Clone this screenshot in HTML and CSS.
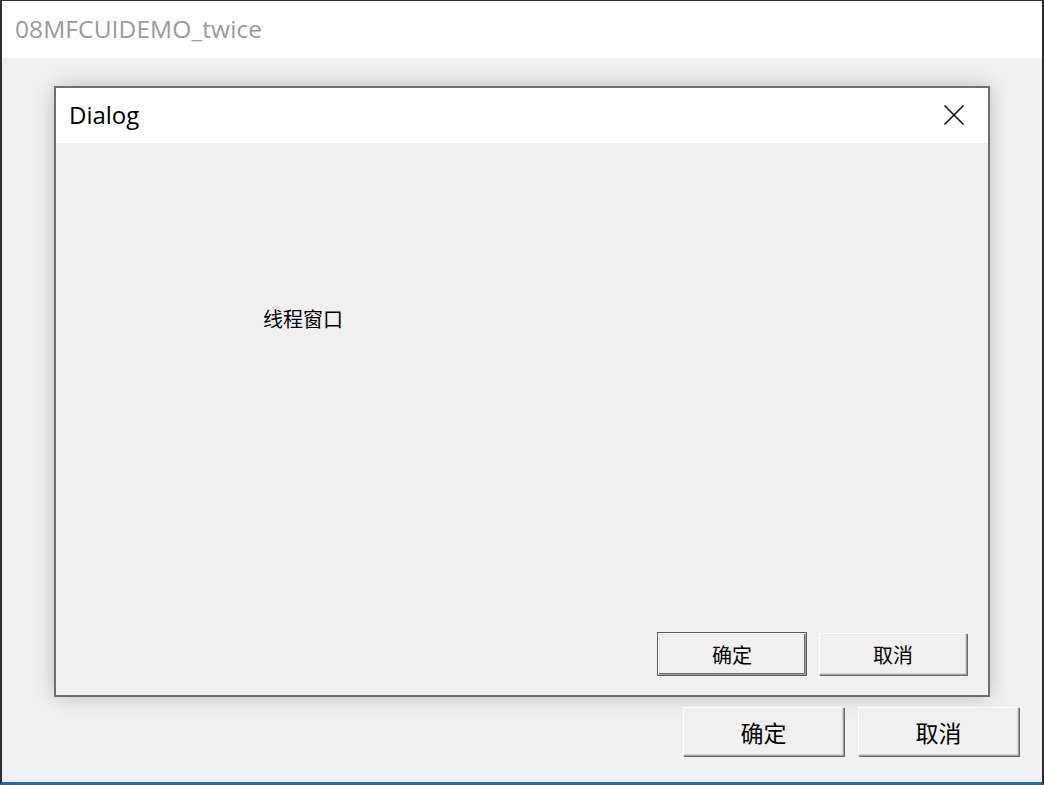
FILE: index.html
```html
<!DOCTYPE html>
<html lang="zh-CN">
<head>
<meta charset="utf-8">
<title>08MFCUIDEMO_twice</title>
<link rel="stylesheet" href="styles.css">
</head>
<body>
<div class="window">
  <div class="titlebar">08MFCUIDEMO_twice</div>
  <div class="client">
    <div class="dialog">
      <div class="dlg-title">
        <span class="dlg-caption">Dialog</span>
        <svg class="close" width="22" height="22" viewBox="0 0 22 22">
          <path d="M1.5 1.5 L20.5 20.5 M20.5 1.5 L1.5 20.5" stroke="#111" stroke-width="1.6" fill="none"/>
        </svg>
      </div>
      <div class="dlg-body">
        <div class="label">线程窗口</div>
        <div class="dlg-buttons">
          <button class="btn btn-small btn-default">确定</button>
          <button class="btn btn-small">取消</button>
        </div>
      </div>
    </div>
    <div class="main-buttons">
      <button class="btn btn-large">确定</button>
      <button class="btn btn-large">取消</button>
    </div>
  </div>
</div>
</body>
</html>
```
FILE: styles.css
```css
* { box-sizing: border-box; }
html, body { margin: 0; padding: 0; }
body { width: 1044px; height: 785px; overflow: hidden; background: #f0f0f0; }

.window {
  width: 1044px;
  height: 785px;
  border-left: 2px solid #2f2f2f;
  border-right: 2px solid #2b2b2b;
  border-top: 1px solid #2f2f2f;
  border-bottom: 3px solid #1f6aa5;
  background: #f0f0f0;
  display: flex;
  flex-direction: column;
}

.titlebar {
  height: 57px;
  background: #ffffff;
  color: #9a9a9a;
  font-family: "Open Sans", "Noto Sans", sans-serif;
  font-size: 24.5px;
  line-height: 56px;
  padding-left: 13px;
  letter-spacing: 0.1px;
  flex: none;
}

.client {
  flex: 1;
  background: #f0f0f0;
  padding-top: 28px;
  padding-left: 52px;
  display: flex;
  flex-direction: column;
}

.dialog {
  width: 936px;
  height: 611px;
  border: 2px solid #6e6e6e;
  background: #f0f0f0;
  box-shadow: 0 0 18px rgba(0,0,0,0.22);
  display: flex;
  flex-direction: column;
}

.dlg-title {
  height: 55px;
  background: #ffffff;
  display: flex;
  align-items: center;
  justify-content: space-between;
  padding-left: 13px;
  padding-right: 23px;
  flex: none;
}
.dlg-caption {
  font-family: "Open Sans", "Noto Sans", sans-serif;
  font-size: 24px;
  color: #000;
  margin-top: -3px;
}
.close { display: block; margin-top: -2px; }

.dlg-body {
  flex: 1;
  display: flex;
  flex-direction: column;
  padding: 163px 21px 20px 207px;
}
.label {
  font-family: "Noto Sans CJK SC", sans-serif;
  font-size: 20px;
  line-height: 26px;
  color: #000;
}
.dlg-buttons {
  margin-top: auto;
  display: flex;
  justify-content: flex-end;
  gap: 13px;
}

.btn {
  font-family: "Noto Sans CJK SC", sans-serif;
  color: #000;
  background: #f0f0f0;
  border: 1px solid;
  border-color: #ffffff #a0a0a0 #a0a0a0 #ffffff;
  box-shadow: inset -1px -1px 0 #d6d6d6, 1px 1px 0 #696969;
  padding: 0;
  margin: 0;
}
.btn-small {
  width: 148px;
  height: 42px;
  font-size: 20px;
}
.btn-default {
  outline: 1px solid #5a5a5a;
  border-color: #ffffff #a0a0a0 #a0a0a0 #ffffff;
  box-shadow: inset -1px -1px 0 #6e6e6e, inset 1px 1px 0 #e3e3e3;
}
.btn-large {
  width: 161px;
  height: 49px;
  font-size: 23px;
}

.main-buttons {
  margin-top: 10px;
  display: flex;
  justify-content: flex-end;
  gap: 14px;
  padding-right: 23px;
}
```
